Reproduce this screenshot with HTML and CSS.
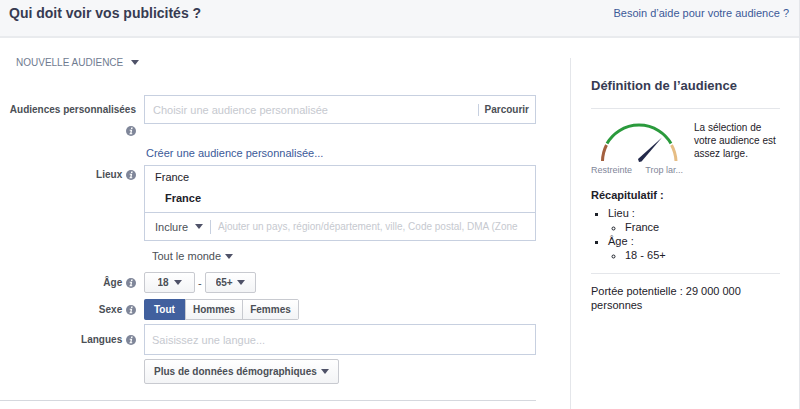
FILE: index.html
```html
<!DOCTYPE html>
<html lang="fr">
<head>
  <meta charset="UTF-8" />
  <meta name="viewport" content="width=device-width, initial-scale=1.0" />
  <title>Audience</title>
  <link rel="stylesheet" href="styles.css">
</head>
<body>
  <svg class="sprite" aria-hidden="true">
    <symbol id="info" viewBox="0 0 10 10">
      <circle cx="5" cy="5" r="5" fill="#7f8699" />
      <path d="M5.2 1.6h1.5l-.3 1.4H4.9zM3.6 3.8h2.6L5.5 7.3h.8l-.2 1H3.4l.2-1h.6l.5-2.5h-.9z" fill="#fff" />
    </symbol>
  </svg>

  <div class="panel">
    <header class="panel-header">
      <h1>Qui doit voir vos publicités ?</h1>
      <a href="#">Besoin d’aide pour votre audience ?</a>
    </header>

    <div class="panel-body">
      <form class="audience-form">
        <button type="button" class="new-audience caret">NOUVELLE AUDIENCE</button>

        <div class="row row-custom">
          <label class="row-label" for="custom"><span>Audiences personnalisées</span> <svg class="info"><use href="#info" /></svg></label>
          <div class="field">
            <input id="custom" type="text" placeholder="Choisir une audience personnalisée">
            <button type="button" class="browse">Parcourir</button>
          </div>
        </div>

        <div class="row row-create">
          <a class="create-link" href="#">Créer une audience personnalisée...</a>
        </div>

        <div class="row row-places">
          <label class="row-label" for="places">Lieux <svg class="info"><use href="#info" /></svg></label>
          <div class="places">
            <div class="places-list">
              <div>France</div>
              <div class="place">France</div>
            </div>
            <div class="places-add">
              <span class="select caret">
                <select aria-label="Inclure ou exclure"><option>Inclure</option></select>
              </span>
              <input id="places" type="text" placeholder="Ajouter un pays, région/département, ville, Code postal, DMA (Zone">
            </div>
          </div>
        </div>

        <div class="row row-people">
          <span class="select caret people">
            <select aria-label="Personnes"><option>Tout le monde</option></select>
          </span>
        </div>

        <div class="row row-age">
          <label class="row-label" for="age-min">Âge <svg class="info"><use href="#info" /></svg></label>
          <div class="ages">
            <span class="select caret button">
              <select id="age-min"><option>18</option></select>
            </span>
            <span>-</span>
            <span class="select caret button">
              <select aria-label="Âge maximum"><option>65+</option></select>
            </span>
          </div>
        </div>

        <div class="row row-gender" role="radiogroup" aria-labelledby="gender">
          <span class="row-label" id="gender">Sexe <svg class="info"><use href="#info" /></svg></span>
          <div class="segments">
            <label><input type="radio" name="gender" checked>Tout</label>
            <label><input type="radio" name="gender">Hommes</label>
            <label><input type="radio" name="gender">Femmes</label>
          </div>
        </div>

        <div class="row row-languages">
          <label class="row-label" for="languages">Langues <svg class="info"><use href="#info" /></svg></label>
          <div class="field">
            <input id="languages" type="text" placeholder="Saisissez une langue...">
          </div>
        </div>

        <div class="row row-more">
          <button type="button" class="button caret more">Plus de données démographiques</button>
        </div>

        <hr>
      </form>

      <aside class="definition">
        <h2>Définition de l’audience</h2>
        <div class="meter">
          <div class="gauge">
            <svg viewBox="0 0 92 42" aria-hidden="true">
              <g fill="none" stroke-width="3">
                <path d="M11.5 40A37 37 0 0 1 15.500 24" stroke="#a3603f" />
                <path d="M16 22.500A37 37 0 0 1 80 22.500" stroke="#2a9a3c" />
                <path d="M80.500 24A37 37 0 0 1 85 40" stroke="#e6bd84" />
              </g>
              <path d="M47 38L71 16.500L50.500 40.500L48 41Z" fill="#23294a" />
            </svg>
            <div class="gauge-labels"><span>Restreinte</span><span>Trop lar...</span></div>
          </div>
          <p>La sélection de votre audience est assez large.</p>
        </div>
        <h3>Récapitulatif :</h3>
        <ul>
          <li>Lieu :
            <ul><li>France</li></ul>
          </li>
          <li>Âge :
            <ul><li>18 - 65+</li></ul>
          </li>
        </ul>
        <p class="reach">Portée potentielle : 29 000 000 personnes</p>
      </aside>
    </div>
  </div>
</body>
</html>
```
FILE: styles.css
```css
* {
  box-sizing: border-box;
}
body {
  margin: 0;
  font-family: "Liberation Sans", Arial, sans-serif;
  font-size: 11px;
  line-height: 14px;
  color: #1d2129;
  background: #fff;
}
h1, h2, h3, p, ul {
  margin: 0;
}
button, input, select {
  font: inherit;
  color: inherit;
  border: 0;
  padding: 0;
  margin: 0;
  background: none;
  border-radius: 0;
}
button, select {
  cursor: pointer;
}
a {
  color: #3b5998;
  text-decoration: none;
}
.sprite {
  display: none;
}
.panel {
  min-height: 100vh;
  border-right: 1px solid #e4e6ea;
  display: flex;
  flex-direction: column;
}
.panel-header {
  display: flex;
  justify-content: space-between;
  height: 38px;
  padding: 4px 10px 0 9px;
  line-height: 18px;
  background: #f6f7f9;
  border-bottom: 2px solid #e9ebee;
}
h1 {
  font-size: 14px;
  color: #373b52;
}
.panel-body {
  flex: 1;
  display: flex;
}

/* form */
.audience-form {
  flex: 1;
  min-width: 0;
  padding: 17px 34px 0 0;
  color: #4b4f56;
}
.caret::after {
  content: "";
  display: inline-block;
  border: 4px solid transparent;
  border-top: 5px solid #4f5268;
  border-bottom: 0;
  margin-left: 6px;
  vertical-align: 1px;
  pointer-events: none;
}
.new-audience {
  display: block;
  margin-left: 16px;
  font-size: 10px;
  line-height: 16px;
  color: #6f7b90;
}
.new-audience::after {
  margin-left: 8px;
}
.row {
  display: grid;
  grid-template-columns: 136px minmax(0, 1fr);
  column-gap: 8px;
}
.row > :only-child {
  grid-column: 2;
  justify-self: start;
}
.row-label {
  text-align: right;
  font-size: 10px;
  font-weight: bold;
}
.info {
  width: 10px;
  height: 10px;
  margin-left: 1px;
  vertical-align: -2px;
}
.field {
  display: flex;
  align-items: center;
  height: 29px;
  padding: 0 6px 0 8px;
  border: 1px solid #c7d0e0;
}
.field input, .places-add input {
  flex: 1;
  min-width: 0;
}
input::placeholder {
  color: #c6c9cf;
  opacity: 1;
}
.browse {
  padding-left: 6px;
  border-left: 1px solid #c7d0e0;
  font-size: 10px;
  font-weight: bold;
  line-height: 12px;
}
.row-custom {
  margin-top: 24px;
}
.row-custom .row-label {
  padding-top: 4px;
  line-height: 21px;
}
.row-custom .row-label span {
  display: block;
}
.row-create {
  margin-top: 5px;
}
.create-link {
  padding-left: 2px;
}
.row-places {
  margin-top: 5px;
}
.row-places .row-label {
  padding-top: 3px;
}
.places {
  border: 1px solid #c7d0e0;
}
.places-list {
  height: 46px;
  padding: 1px 10px;
  line-height: 21px;
  color: #1d2129;
}
.place {
  padding-left: 10px;
  font-weight: bold;
}
.places-add {
  display: flex;
  align-items: center;
  height: 28px;
  padding: 0 8px 0 10px;
  border-top: 1px solid #c7d0e0;
}
.places-add input {
  margin-left: 7px;
  padding-left: 7px;
  border-left: 1px solid #c7d0e0;
  font-size: 10px;
}
.select {
  display: inline-flex;
  align-items: center;
}
select {
  appearance: none;
}
.row-people {
  margin-top: 8px;
}
.people {
  padding-left: 8px;
}
.people::after {
  margin-left: 3px;
}
.button {
  height: 21px;
  padding: 0 13px;
  border: 1px solid #c8cad0;
  border-radius: 2px;
  background: linear-gradient(#fff, #f3f4f6);
  font-size: 10px;
  font-weight: bold;
}
.row-age {
  margin-top: 9px;
  align-items: center;
}
.ages {
  display: flex;
  align-items: center;
  gap: 3px;
}
.ages .button {
  min-width: 51px;
  padding: 0 10px;
  justify-content: center;
}
.ages .button::after {
  margin-left: 4px;
}
.row-gender {
  margin-top: 6px;
  align-items: center;
}
.segments {
  display: flex;
  justify-self: start;
  border: 1px solid #c8cad0;
  border-radius: 2px;
  font-size: 10px;
  font-weight: bold;
}
.segments label {
  padding: 0 7px;
  line-height: 19px;
  border-left: 1px solid #c8cad0;
  background: linear-gradient(#fff, #f3f4f6);
  cursor: pointer;
}
.segments label:first-child {
  padding: 0 10px;
}
.segments input {
  appearance: none;
  position: absolute;
}
.segments label:has(:checked) {
  margin: -1px 0 -1px -1px;
  line-height: 21px;
  border-left: 0;
  border-radius: 2px 0 0 2px;
  background: #41609e;
  color: #fff;
}
.row-languages {
  margin-top: 4px;
  align-items: center;
}
.row-languages .field {
  height: 31px;
  padding-left: 7px;
}
.row-more {
  margin-top: 4px;
}
.more {
  height: 25px;
  padding: 0 9px;
}
.more::after {
  margin-left: 4px;
}
hr {
  margin: 16px 0 0;
  border: 0;
  border-top: 1px solid #d5d8de;
}

/* sidebar */
.definition {
  width: 229px;
  margin-top: 20px;
  padding: 20px 19px 0 20px;
  border-left: 1px solid #e4e6ea;
}
h2 {
  padding-bottom: 14px;
  border-bottom: 1px solid #e4e6ea;
  font-size: 13px;
  line-height: 16px;
  color: #373b52;
}
.meter {
  display: flex;
  gap: 11px;
  padding-top: 12px;
}
.gauge {
  width: 92px;
}
.gauge svg {
  display: block;
  width: 100%;
}
.gauge-labels {
  display: flex;
  justify-content: space-between;
  font-size: 9px;
  line-height: 14px;
  color: #7f8699;
}
.meter p {
  flex: 1;
  font-size: 10px;
  line-height: 13px;
}
h3 {
  margin-top: 11px;
  font-size: 11px;
}
.definition ul {
  padding-left: 17px;
  list-style: square;
}
.definition > ul {
  margin-top: 4px;
  padding-bottom: 11px;
  border-bottom: 1px solid #e4e6ea;
}
.definition ul ul {
  list-style: circle;
}
.reach {
  margin-top: 10px;
}
```
